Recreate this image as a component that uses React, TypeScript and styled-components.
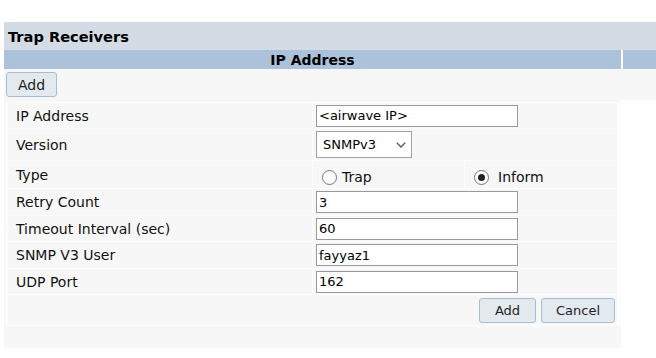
import React from "react";
import styled, { createGlobalStyle } from "styled-components";

const Global = createGlobalStyle`
  html, body { margin: 0; padding: 0; background: #ffffff; }
  body { font-family: "DejaVu Sans", Verdana, sans-serif; color: #000; }
`;

const Page = styled.div`
  padding: 22px 0 0 4px;
  width: 652px;
`;

const TitleBar = styled.div`
  height: 28px;
  background: #d3dbe4;
  display: flex;
  align-items: center;
  padding-left: 4px;
  font-weight: bold;
  font-size: 14.6px;
  color: #000;
`;

const HeaderRow = styled.div`
  display: flex;
  gap: 2px;
  height: 19px;
`;

const HeaderCell = styled.div<{ $main?: boolean }>`
  background: #abc2da;
  ${(p) => (p.$main ? "width: 617px;" : "flex: 1;")}
  display: flex;
  align-items: center;
  justify-content: center;
  font-weight: bold;
  font-size: 14px;
`;

const Toolbar = styled.div`
  background: #f7f7f7;
  height: 31px;
  padding: 3px 0 0 2px;
  box-sizing: border-box;
`;

const Button = styled.button<{ $w: number; $size?: number }>`
  width: ${(p) => p.$w}px;
  height: 25px;
  padding: 0;
  background: #e2e9ef;
  border: 1px solid #a9bdd0;
  border-radius: 3px;
  font-family: "DejaVu Sans", Verdana, sans-serif;
  font-size: ${(p) => p.$size ?? 13}px;
  color: #222;
  cursor: pointer;
`;

const FormArea = styled.div`
  width: 617px;
  background: #f7f7f7;
  padding: 2px 0 22px 2px;
  box-sizing: border-box;
`;

const FormGrid = styled.div`
  display: grid;
  grid-template-columns: 304px 151px 152px;
  grid-template-rows: 25px 31px 27px 26px 25px 26px 25px 30px;
  gap: 1px;
  padding: 1px 1px 1px 2px;
  width: 612px;
  background: #fdfdfd;
`;

const Label = styled.div`
  background: #f7f7f7;
  display: flex;
  align-items: center;
  padding-left: 8px;
  font-size: 14px;
  color: #111;
`;

const Field = styled.div<{ $span?: number; $bottom?: boolean }>`
  background: #f7f7f7;
  grid-column: span ${(p) => p.$span ?? 2};
  display: flex;
  align-items: ${(p) => (p.$bottom ? "flex-end" : "center")};
  padding-left: 3px;
  ${(p) => (p.$bottom ? "padding-bottom: 3px;" : "")}
`;

const TextInput = styled.input`
  width: 202px;
  height: 22px;
  box-sizing: border-box;
  border: 1px solid #999;
  padding: 0 2px;
  margin: 0;
  background: #fff;
  font-family: "DejaVu Sans", Verdana, sans-serif;
  font-size: 13px;
  color: #000;
  outline: none;
`;

const SelectWrap = styled.div`
  position: relative;
  width: 96px;
  height: 27px;
`;

const Select = styled.select`
  appearance: none;
  -webkit-appearance: none;
  width: 96px;
  height: 27px;
  box-sizing: border-box;
  border: 1px solid #a0a0a0;
  border-radius: 0;
  background: #fff;
  padding: 0 0 0 6px;
  margin: 0;
  font-family: "DejaVu Sans", Verdana, sans-serif;
  font-size: 13px;
  color: #000;
  outline: none;
`;

const Chevron = styled.svg`
  position: absolute;
  right: 6px;
  top: 11px;
  pointer-events: none;
`;

const RadioLabel = styled.label`
  display: flex;
  align-items: center;
  gap: 5px;
  padding-left: 6px;
  font-size: 14px;
  color: #111;
`;

const RadioCircle = styled.span<{ $checked?: boolean }>`
  width: 15px;
  height: 15px;
  box-sizing: border-box;
  border-radius: 50%;
  border: 1px solid #767676;
  background: #fff;
  display: flex;
  align-items: center;
  justify-content: center;
  margin-right: ${(p) => (p.$checked ? 4 : 0)}px;
  &::after {
    content: "";
    display: ${(p) => (p.$checked ? "block" : "none")};
    width: 7px;
    height: 7px;
    border-radius: 50%;
    background: #222;
  }
`;

const ButtonCell = styled.div`
  grid-column: span 3;
  background: #f7f7f7;
  display: flex;
  justify-content: flex-end;
  align-items: flex-start;
  gap: 5px;
  padding: 3px 2px 0 0;
`;

const rows: { label: string; value: string }[] = [
  { label: "Retry Count", value: "3" },
  { label: "Timeout Interval (sec)", value: "60" },
  { label: "SNMP V3 User", value: "fayyaz1" },
  { label: "UDP Port", value: "162" },
];

export default function App() {
  return (
    <>
      <Global />
      <Page>
        <TitleBar>Trap Receivers</TitleBar>
        <HeaderRow>
          <HeaderCell $main>IP Address</HeaderCell>
          <HeaderCell />
        </HeaderRow>
        <Toolbar>
          <Button $w={51} $size={14}>Add</Button>
        </Toolbar>
        <FormArea>
          <FormGrid>
            <Label>IP Address</Label>
            <Field>
              <TextInput defaultValue="<airwave IP>" />
            </Field>
            <Label>Version</Label>
            <Field>
              <SelectWrap>
                <Select defaultValue="SNMPv3">
                  <option>SNMPv1</option>
                  <option>SNMPv2</option>
                  <option>SNMPv3</option>
                </Select>
                <Chevron width="10" height="6" viewBox="0 0 10 6">
                  <path d="M0.8 0.8 L5 5 L9.2 0.8" fill="none" stroke="#555" strokeWidth="1.3" />
                </Chevron>
              </SelectWrap>
            </Field>
            <Label>Type</Label>
            <Field $span={1} $bottom>
              <RadioLabel>
                <RadioCircle />
                Trap
              </RadioLabel>
            </Field>
            <Field $span={1} $bottom>
              <RadioLabel>
                <RadioCircle $checked />
                Inform
              </RadioLabel>
            </Field>
            {rows.map((r) => (
              <React.Fragment key={r.label}>
                <Label>{r.label}</Label>
                <Field>
                  <TextInput defaultValue={r.value} />
                </Field>
              </React.Fragment>
            ))}
            <ButtonCell>
              <Button $w={57}>Add</Button>
              <Button $w={74}>Cancel</Button>
            </ButtonCell>
          </FormGrid>
        </FormArea>
      </Page>
    </>
  );
}
